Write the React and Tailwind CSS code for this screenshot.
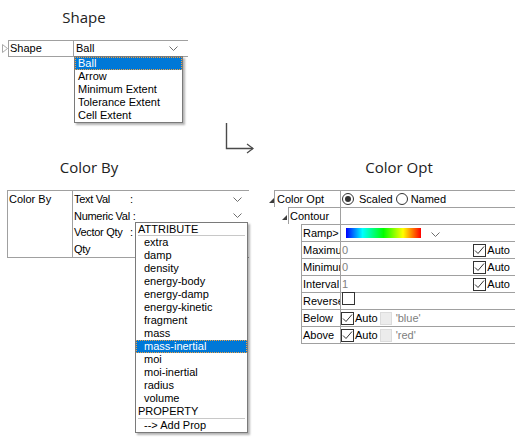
import React from 'react';

const GRID = 'border-[#a0a0a0]';

function Chevron() {
    return (
        <svg width="9" height="5" viewBox="0 0 9 5" className="shrink-0">
            <polyline points="0.5,0.5 4.5,4.5 8.5,0.5" fill="none" stroke="#6e6e6e" strokeWidth="1" />
        </svg>
    );
}

function Expanded() {
    return (
        <svg width="5" height="5" viewBox="0 0 5 5">
            <polygon points="5,0 5,5 0,5" fill="#3c3c3c" />
        </svg>
    );
}

function Check({ checked = true }) {
    return (
        <span className="inline-flex h-[13px] w-[13px] shrink-0 items-center justify-center border border-[#333]">
            {checked && (
                <svg width="11" height="11" viewBox="0 0 11 11">
                    <polyline points="1,5.5 4,8.5 10,1.5" fill="none" stroke="#333" strokeWidth="1" />
                </svg>
            )}
        </span>
    );
}

function Radio({ on }) {
    return (
        <span className="inline-flex h-[12px] w-[12px] shrink-0 items-center justify-center rounded-full border border-[#333]">
            {on && <span className="h-[6px] w-[6px] rounded-full bg-[#333]" />}
        </span>
    );
}

function Title({ children, width }) {
    return (
        <div className={`${width} text-center font-['Open_Sans',sans-serif] text-[15px] leading-[20px] text-[#222]`}>
            {children}
        </div>
    );
}

function ShapeSection() {
    const items = ['Ball', 'Arrow', 'Minimum Extent', 'Tolerance Extent', 'Cell Extent'];
    return (
        <div className="pt-[7px]">
            <Title width="w-[168px]">Shape</Title>
            <div className="relative mt-[13px] flex h-[17px]">
                <div className="flex w-[8px] items-center pl-[2px]">
                    <svg width="6" height="9" viewBox="0 0 6 9">
                        <polygon points="0.5,0.5 5.5,4.5 0.5,8.5" fill="none" stroke="#a8a8a8" strokeWidth="1" />
                    </svg>
                </div>
                <div className={`flex w-[180px] border-y border-l ${GRID}`}>
                    <div className={`w-[65px] border-r ${GRID} pl-[1px] leading-[15px]`}>Shape</div>
                    <div className="flex flex-1 items-center justify-between pl-[2px] pr-[10px] leading-[15px]">
                        <span>Ball</span>
                        <Chevron />
                    </div>
                </div>
                <div className="absolute left-[74px] top-[16px] w-[109px] border border-[#7a7a7a] bg-white shadow-[2px_2px_2px_rgba(0,0,0,0.3)]">
                    {items.map((it, i) => (
                        <div
                            key={it}
                            className={`h-[13px] pl-[3px] leading-[13px] whitespace-nowrap ${
                                i === 0
                                    ? 'bg-[#0078d7] text-white outline-1 outline-dotted -outline-offset-1 outline-[#f0a040]'
                                    : ''
                            }`}
                        >
                            {it}
                        </div>
                    ))}
                </div>
            </div>
        </div>
    );
}

function ColorBySection() {
    const rows = [
        { label: 'Text Val', chevron: true },
        { label: 'Numeric Val', chevron: true },
        { label: 'Vector Qty', chevron: false },
        { label: 'Qty', chevron: false, noColon: true },
    ];
    const attrs = [
        'extra', 'damp', 'density', 'energy-body', 'energy-damp', 'energy-kinetic',
        'fragment', 'mass', 'mass-inertial', 'moi', 'moi-inertial', 'radius', 'volume',
    ];
    return (
        <div className="w-[260px] shrink-0 pt-[1px]">
            <Title width="w-[178px]">Color By</Title>
            <div className={`relative ml-[7px] mt-[13px] flex h-[68px] w-[242px] border-y border-l ${GRID}`}>
                <div className={`w-[65px] border-r ${GRID} pl-[1px] pt-[1px] leading-[15px]`}>Color By</div>
                <div className="flex-1 pl-[1px]">
                    {rows.map((r) => (
                        <div key={r.label} className="flex h-[16.5px] items-center justify-between pr-[7px]">
                            <div className="flex whitespace-nowrap">
                                <span className="min-w-[56px] pr-[3px] tracking-[-0.3px]">{r.label}</span>
                                {!r.noColon && <span>:</span>}
                            </div>
                            {r.chevron && <Chevron />}
                        </div>
                    ))}
                </div>
                <div className="absolute left-[127px] top-[31px] w-[113px] border border-[#7a7a7a] bg-white shadow-[2px_2px_2px_rgba(0,0,0,0.3)]">
                    <div className="mx-[2px] h-[13px] border-b border-[#c8c8c8] leading-[12px]">ATTRIBUTE</div>
                    {attrs.map((a) => (
                        <div
                            key={a}
                            className={`h-[13px] pl-[8px] leading-[13px] ${
                                a === 'mass-inertial'
                                    ? 'bg-[#0078d7] text-white outline-1 outline-dotted -outline-offset-1 outline-[#f0a040]'
                                    : ''
                            }`}
                        >
                            {a}
                        </div>
                    ))}
                    <div className="mx-[2px] h-[14px] border-b border-[#c8c8c8] leading-[13px]">PROPERTY</div>
                    <div className="h-[13px] pl-[8px] leading-[13px]">--&gt; Add Prop</div>
                </div>
            </div>
        </div>
    );
}

function OptRow({ indent, labelW, label, tri, last, children }) {
    return (
        <div className={`flex ${last ? 'h-[18px]' : 'h-[17px]'}`}>
            <div className={`${indent} relative shrink-0`}>
                {tri && <div className={`absolute top-[8px] ${tri}`}><Expanded /></div>}
            </div>
            <div className={`flex min-w-0 flex-1 border-t border-l ${GRID} ${last ? 'border-b' : ''}`}>
                <div className={`${labelW} shrink-0 overflow-hidden whitespace-nowrap border-r ${GRID} pl-[1px] leading-[16px]`}>
                    {label}
                </div>
                <div className="flex min-w-0 flex-1 items-center">{children}</div>
            </div>
        </div>
    );
}

function AutoBox() {
    return (
        <div className="flex items-center pr-[5px]">
            <Check />
            <span className="ml-[1px]">Auto</span>
        </div>
    );
}

function ColorOptSection() {
    return (
        <div className="w-[255px] shrink-0 pt-[1px]">
            <Title width="w-[278px]">Color Opt</Title>
            <div className="mt-[13px]">
                <OptRow indent="w-[14px]" labelW="w-[66px]" label={<span className="pl-[1px]">Color Opt</span>} tri="left-[9px]">
                    <div className="flex items-center pl-[1px]">
                        <Radio on />
                        <span className="ml-[5px]">Scaled</span>
                        <span className="ml-[3px] flex"><Radio /></span>
                        <span className="ml-[3px]">Named</span>
                    </div>
                </OptRow>
                <OptRow indent="w-[28px]" labelW="w-[52px]" label="Contour" tri="left-[22px]" />
                <OptRow indent="w-[41px]" labelW="w-[39px]" label="Ramp>">
                    <div className="ml-[5px] h-[10px] w-[75px] bg-[linear-gradient(to_right,#0000ff,#00ffff_22%,#00ff00_50%,#ffff00_76%,#ff0000)]" />
                    <div className="ml-[10px] mt-[3px]"><Chevron /></div>
                </OptRow>
                {[['Maximum', '0'], ['Minimum', '0'], ['Interval', '1']].map(([l, v]) => (
                    <OptRow key={l} indent="w-[41px]" labelW="w-[39px]" label={l}>
                        <div className="flex flex-1 items-center justify-between">
                            <span className="pl-[1px] text-[#808080]">{v}</span>
                            <AutoBox />
                        </div>
                    </OptRow>
                ))}
                <OptRow indent="w-[41px]" labelW="w-[39px]" label="Reverse">
                    <div className="pl-[1px]"><Check checked={false} /></div>
                </OptRow>
                {[['Below', "'blue'"], ['Above', "'red'"]].map(([l, v], i) => (
                    <OptRow key={l} indent="w-[41px]" labelW="w-[39px]" label={l} last={i === 1}>
                        <div className="flex items-center">
                            <Check />
                            <span className="ml-[1px]">Auto</span>
                            <span className="ml-[2px] h-[13px] w-[12px] border border-[#dcdcdc] bg-[#ececec]" />
                            <span className="ml-[4px] text-[#808080]">{v}</span>
                        </div>
                    </OptRow>
                ))}
            </div>
        </div>
    );
}

export default function App() {
    return (
        <div className="relative h-[439px] w-[515px] overflow-hidden bg-white font-['Liberation_Sans',Arial,sans-serif] text-[11px] text-black">
            <ShapeSection />
            <div className="ml-[222px] mt-[65px] h-[34px]">
                <svg width="36" height="34" viewBox="0 0 36 34">
                    <polyline points="4.5,1 4.5,26.5 31,26.5" fill="none" stroke="#4a4a4a" strokeWidth="1.4" />
                    <polyline points="25,22 31,26.5 25,31" fill="none" stroke="#4a4a4a" strokeWidth="1.2" />
                </svg>
            </div>
            <div className="flex">
                <ColorBySection />
                <ColorOptSection />
            </div>
        </div>
    );
}
